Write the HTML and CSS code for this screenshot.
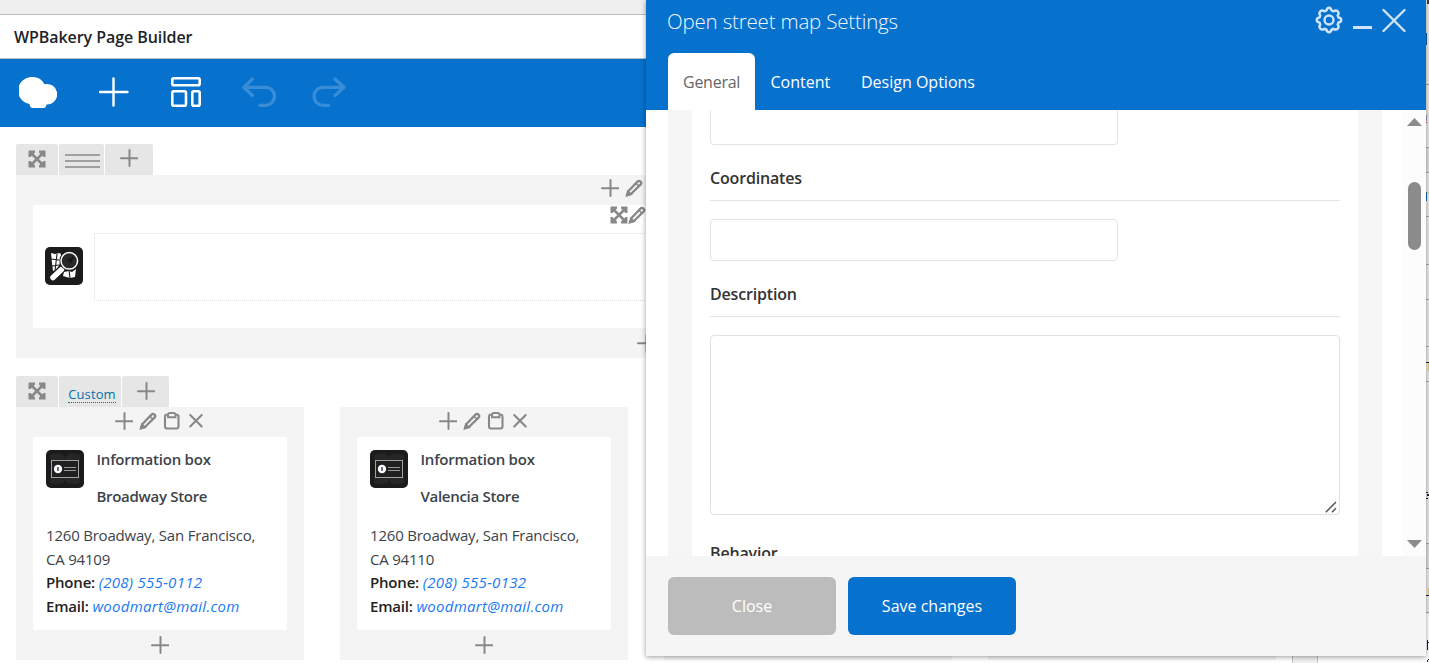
FILE: index.html
```html
<!DOCTYPE html>
<html lang="en">
<head>
<meta charset="utf-8">
<title>WPBakery Page Builder</title>
<link rel="stylesheet" href="styles.css">
</head>
<body>
<svg class="defs" width="0" height="0">
  <symbol id="plus" viewBox="0 0 18 18"><path d="M9.500 1v16M1 9.300h16.500" fill="none" stroke="currentColor" stroke-width="2" stroke-linecap="round"/></symbol>
  <symbol id="pencil" viewBox="0 0 18 18"><path d="M2.200 16l1.300-4L12.500 2.600a2 2 0 0 1 3 3L6.200 14.800z" fill="none" stroke="currentColor" stroke-width="2.300" stroke-linejoin="round"/><path d="M1.500 16.800l1.300-4.500 3.400 3zM11 4.200l3 3" fill="currentColor" stroke="currentColor" stroke-width="1.600"/></symbol>
  <symbol id="clip" viewBox="0 0 18 18"><path d="M4.500 2.500Q2 2.500 2 4.500V14.500q0 2 2 2h9.500q2 0 2-2V4.500q0-2-2.500-2" fill="none" stroke="currentColor" stroke-width="2.100"/><path d="M5 5.200V3q0-2 2-2h3.500q2 0 2 2v2.200z" fill="none" stroke="currentColor" stroke-width="1.900"/></symbol>
  <symbol id="close" viewBox="0 0 18 18"><path d="M3.200 3l11.500 11.500M14.700 3L3.200 14.500" fill="none" stroke="currentColor" stroke-width="2.100" stroke-linecap="round"/></symbol>
  <symbol id="move" viewBox="0 0 18 18"><path d="M3 3l12 12M15 3L3 15" stroke="currentColor" stroke-width="2.500"/><path d="M.5.500h6.500v2L2.500 7h-2zM17.500.500h-6.500v2L15.500 7h2zM.5 17.500h6.500v-2L2.500 11h-2zM17.500 17.500h-6.500v-2l4.500-4.500h2z" fill="currentColor"/></symbol>
  <symbol id="info" viewBox="0 0 38 38"><rect width="38" height="38" rx="5" fill="#1b1b1b"/><path d="M4 5q15-5 15 5 0-10 15-5 1 9-5 14 6 5 5 14-15 4-15-5 0 9-15 5-1-9 5-14-6-5-5-14z" fill="#262626"/><rect x="5.500" y="10.500" width="27" height="17" fill="#202020" stroke="#a3a3a3"/><circle cx="12" cy="19" r="4.200" fill="#fff"/><path d="M12 17v4" stroke="#235" stroke-width="1.300"/><path d="M18 17.500h12M18 20.500h12" stroke="#999"/></symbol>
</svg>

<div class="page">
  <main class="builder">
    <div class="topstrip"></div>
    <h1 class="title"><span>WPBakery Page Builder</span></h1>
    <nav class="toolbar">
      <svg width="38" height="31" viewBox="0 0 38 31"><path d="M13.500 0A13.500 13.500 0 0 1 25.500 7.200 10.300 10.300 0 1 1 27.500 27.500Q27 31 24.500 31H13.500q-2.500 0-3-4A13.600 13.600 0 0 1 13.500 0z" fill="#fff"/></svg>
      <svg width="30" height="30" viewBox="0 0 30 30"><path d="M14.500 1.500v27M1 15h27.500" stroke="#fff" stroke-width="2.400" stroke-linecap="round"/></svg>
      <svg width="30" height="30" viewBox="0 0 30 30" fill="none" stroke="#fff" stroke-width="2.600"><rect x="1.300" y="1.300" width="27.400" height="7" rx="1.500"/><rect x="1.300" y="14.300" width="13.700" height="14.400" rx="1.500"/><rect x="21.300" y="14.300" width="7.400" height="14.400" rx="1.500"/></svg>
      <svg class="dim" width="34" height="30" viewBox="0 0 34 30" fill="none" stroke="#fff" stroke-width="3.200" stroke-linecap="round" stroke-linejoin="round"><path d="M10.500 2L1.800 10.300l8.700 8.200M3 10.300h20.500a9 9 0 0 1 0 18h-5.500"/></svg>
      <svg class="dim" width="34" height="30" viewBox="0 0 34 30" fill="none" stroke="#fff" stroke-width="3.200" stroke-linecap="round" stroke-linejoin="round"><path d="M23 2l9 8.300-9 8.200M31 10.300H11a9 9 0 0 0 0 18h5.500"/></svg>
    </nav>

    <section class="row row-map">
      <div class="tabs">
        <span class="tab tab-move"><svg class="i"><use href="#move"/></svg></span>
        <span class="tab tab-layout"><i></i><i></i><i></i></span>
        <span class="tab tab-add"><svg class="i"><use href="#plus"/></svg></span>
      </div>
      <div class="mapcol">
        <div class="controls"><svg class="i"><use href="#plus"/></svg><svg class="i"><use href="#pencil"/></svg><svg class="i"><use href="#clip"/></svg><svg class="i"><use href="#close"/></svg></div>
        <div class="mapcard">
          <div class="tight"><svg class="i"><use href="#move"/></svg><svg class="i"><use href="#pencil"/></svg><svg class="i"><use href="#clip"/></svg><svg class="i"><use href="#close"/></svg></div>
          <div class="mapbody">
            <svg class="mapicon" width="38" height="38" viewBox="0 0 38 38"><rect width="38" height="38" rx="5" fill="#1c1c1c"/><path d="M6 6l4 1 5-1 2 3-4 13-5 2-1-8zM19 25l5-1 3 1 4-3-1 8-5 1-7-2z" fill="#fff"/><path d="M6 12l8 1M12 7l-2 17M7 19l7-1M24 23l1 8" stroke="#1c1c1c" stroke-width="1.100"/><path d="M18 20L9 30" stroke="#1c1c1c" stroke-width="7.500" stroke-linecap="round"/><path d="M16.500 22.500L8 30.500" stroke="#fff" stroke-width="5.500" stroke-linecap="round"/><circle cx="24.300" cy="13.800" r="10" fill="#1c1c1c"/><circle cx="24.300" cy="13.800" r="8.300" fill="#292929" stroke="#fff" stroke-width="1.500"/><path d="M22 13l7-4-3 8z" fill="#171717"/></svg>
            <div class="dotted"></div>
          </div>
        </div>
        <div class="addbar"><svg class="i"><use href="#plus"/></svg></div>
      </div>
    </section>

    <section class="row row-stores">
      <div class="tabs">
        <span class="tab tab-move"><svg class="i"><use href="#move"/></svg></span>
        <span class="tab tab-custom"><a>Custom</a></span>
        <span class="tab tab-add narrow"><svg class="i"><use href="#plus"/></svg></span>
      </div>
      <div class="cols">
        <div class="col">
          <div class="controls"><svg class="i"><use href="#plus"/></svg><svg class="i"><use href="#pencil"/></svg><svg class="i"><use href="#clip"/></svg><svg class="i"><use href="#close"/></svg></div>
          <article class="card">
            <div class="head"><svg width="38" height="38"><use href="#info"/></svg><div><h2>Information box</h2><h3>Broadway Store</h3></div></div>
            <p>1260 Broadway, San Francisco,<br>CA 94109<br><b>Phone:</b> <em>(208) 555-0112</em><br><b>Email:</b> <em>woodmart@mail.com</em></p>
          </article>
          <div class="addbar"><svg class="i"><use href="#plus"/></svg></div>
        </div>
        <div class="col">
          <div class="controls"><svg class="i"><use href="#plus"/></svg><svg class="i"><use href="#pencil"/></svg><svg class="i"><use href="#clip"/></svg><svg class="i"><use href="#close"/></svg></div>
          <article class="card">
            <div class="head"><svg width="38" height="38"><use href="#info"/></svg><div><h2>Information box</h2><h3>Valencia Store</h3></div></div>
            <p>1260 Broadway, San Francisco,<br>CA 94110<br><b>Phone:</b> <em>(208) 555-0132</em><br><b>Email:</b> <em>woodmart@mail.com</em></p>
          </article>
          <div class="addbar"><svg class="i"><use href="#plus"/></svg></div>
        </div>
        <div class="col"></div>
        <div class="col"></div>
      </div>
    </section>
  </main>
  <div class="gutter"></div>
  <aside class="side">
    <svg width="3" height="663" viewBox="0 0 3 663" shape-rendering="crispEdges"><path fill="#ebebeb" d="M0 0h3v663H0z"/><path fill="#dedede" d="M0 148h3v24H0zM0 544h3v24H0z"/><path fill="#fff" d="M0 614h3v49H0z"/><path fill="#aaa" d="M0 84h3v1H0zM0 147h3v1H0zM0 172h3v1H0zM0 216h3v1H0zM0 264h3v1H0zM0 299h3v1H0zM0 346h3v1H0zM0 381h3v1H0zM0 543h3v1H0zM0 568h3v1H0zM0 612h3v1H0z"/><path fill="#4b3540" d="M1 0h2v4H1z"/><path fill="#1765a8" d="M0 33h1v12H0zM0 192h1v9H0z"/><path fill="#a892bd" d="M0 115h1v6H0z"/><path fill="#c33" d="M0 122h1v1H0z"/><path fill="#223" d="M0 362h3v1H0zM0 492h2v1H0zM1 494h2v2H1zM0 498h2v1H0zM0 595h3v1H0zM0 642h3v1H1zM1 640h1v10H1zM2 659h1v1H2zM1 660h1v2H1z"/><path fill="#e8c477" d="M2 192h1v2H2zM2 363h1v8H2zM2 588h1v7H2z"/></svg>
  </aside>
</div>

<div class="modal">
  <header class="mhead">
    <div class="mtitle"><h2>Open street map Settings</h2>
      <div class="mactions">
        <svg width="28" height="28" viewBox="0 0 28 28" fill="none" stroke="currentColor" stroke-width="2.400"><path stroke-linejoin="round" d="M14 1.700 Q16 1.700 16.500 4.500 L18.500 5.300 Q21 3.500 22.700 5.300 Q24.500 7 22.700 9.500 L23.500 11.500 Q26.300 12 26.300 14 Q26.300 16 23.500 16.500 L22.700 18.500 Q24.500 21 22.700 22.700 Q21 24.500 18.500 22.700 L16.500 23.500 Q16 26.300 14 26.300 Q12 26.300 11.500 23.500 L9.500 22.700 Q7 24.500 5.300 22.700 Q3.500 21 5.300 18.500 L4.500 16.500 Q1.700 16 1.700 14 Q1.700 12 4.500 11.500 L5.300 9.500 Q3.500 7 5.300 5.300 Q7 3.500 9.500 5.300 L11.500 4.500 Q12 1.700 14 1.700z"/><circle cx="14" cy="14" r="4.500"/></svg>
        <svg width="19" height="28" viewBox="0 0 19 28"><path d="M0 21.500h19" stroke="currentColor" stroke-width="3"/></svg>
        <svg width="24" height="28" viewBox="0 0 24 28"><path d="M1.500 4l21 21M22.500 4l-21 21" stroke="currentColor" stroke-width="2.400" stroke-linecap="round"/></svg>
      </div>
    </div>
    <div class="mtabs"><span class="active">General</span><span class="t2">Content</span><span class="t3">Design Options</span></div>
  </header>
  <div class="mbody">
    <div class="panel">
      <div class="fields">
        <div class="input first"></div>
        <label class="coord"><span>Coordinates</span></label>
        <div class="input"></div>
        <label><span>Description</span></label>
        <div class="area"><svg width="12" height="12" viewBox="0 0 12 12"><path d="M.8 11.200L11 1M7 11.200l4-4" stroke="#555" stroke-width="1.500"/></svg></div>
        <label class="behave"><span>Behavior</span></label>
      </div>
    </div>
    <div class="scroll"><svg width="15" height="8"><path d="M0 8l7.500-8L15 8z" fill="#8b8b8b"/></svg><div class="thumb"></div><svg class="down" width="15" height="8"><path d="M0 0h15L7.500 8z" fill="#8b8b8b"/></svg></div>
  </div>
  <footer class="mfoot"><button class="grey">Close</button><button class="blue">Save changes</button></footer>
</div>
</body>
</html>
```
FILE: styles.css
```css
* { box-sizing: border-box; }
body { margin: 0; height: 663px; overflow: hidden; font-family: "Open Sans", "Noto Sans", sans-serif; font-size: 15px; color: #3c434a; background: #fff; }
h1, h2, h3, p { margin: 0; font-weight: 600; }
svg { display: block; flex: none; }
.defs { position: absolute; }
.page { display: flex; height: 663px; }
.builder { width: 1293px; border-right: 1px solid #c3c4c7; background: #fff; overflow: hidden; flex: none; }
.gutter { width: 25px; background: #f0f0f1; border-right: 1px solid #c3c4c7; flex: none; }
.side { flex: 1; display: flex; justify-content: flex-end; background: #fcfcfc; }
.topstrip { height: 15px; background: #efefef; border-bottom: 1px solid #bbb; }
.title { height: 44px; border-bottom: 1px solid #b9bcc0; padding: 0 14px; font-size: 16px; line-height: 44px; letter-spacing: -.07px; color: #1d2327; white-space: nowrap; }
.toolbar { height: 68px; background: #0771ce; display: flex; align-items: center; padding: 0 0 2px 19px; }
.toolbar svg:nth-child(2) { margin-left: 42px; }
.toolbar svg:nth-child(3) { margin-left: 42px; }
.toolbar svg:nth-child(4) { margin-left: 41px; }
.toolbar svg:nth-child(5) { margin-left: 36px; }
.dim { opacity: .2; }
.row { width: 1260px; margin-left: 16px; }
.row-map { margin-top: 17px; }
.row-stores { margin-top: 18px; }
.i { width: 18px; height: 18px; color: #888; }
.tabs { display: flex; gap: 1px; height: 31px; }
.tab { background: #e6e6e6; border-radius: 2px 2px 0 0; display: flex; align-items: center; justify-content: center; }
.tab-move { width: 42px; padding-bottom: 1px; }
.tab-layout { width: 45px; flex-direction: column; gap: 4px; padding: 3px 0 0 1px; }
.tab-layout i { width: 35px; height: 2px; background: #a0a0a0; }
.tab-add { width: 48px; padding-bottom: 3px; }
.tab-add.narrow { width: 47px; padding-bottom: 2px; }
.tab-custom { width: 62px; padding: 5px 0 0 4px; }
.tab-custom a { color: #0073aa; font-size: 13px; letter-spacing: .12px; line-height: 16px; border-bottom: 1px dotted #0073aa; }
.mapcol { height: 183px; background: #f4f4f4; padding: 0 17px; }
.controls { height: 30px; padding-bottom: 4px; display: flex; align-items: center; justify-content: center; gap: 5.700px; }
.mapcard { height: 123px; background: #fff; padding: 1px 12px 0; }
.tight { display: flex; justify-content: center; height: 18px; margin-bottom: 9px; padding-right: 1px; }
.mapbody { display: flex; align-items: center; height: 68px; gap: 11px; }
.mapicon { margin-bottom: 2px; }
.dotted { flex: 1; height: 68px; border: 1px dotted #ddd; }
.addbar { height: 30px; display: flex; align-items: center; justify-content: center; }
.cols { display: flex; gap: 36px; }
.col { width: 288px; height: 253px; background: #f4f4f4; padding: 0 17px; }
.col .controls { padding-bottom: 3px; }
.card { height: 193px; background: #fff; border-radius: 2px; padding: 13px 13px 0; white-space: nowrap; }
.head { display: flex; gap: 12.500px; }
.card h2, .card h3 { font-size: 15px; line-height: 20px; letter-spacing: -.23px; }
.card h2 { margin-top: -1px; }
.card h3 { margin-top: 17px; letter-spacing: -.3px; }
.card p { margin-top: 18px; font-weight: 400; line-height: 23.600px; letter-spacing: -.2px; }
.card b { color: #222; font-weight: 600; }
.card em { color: #1a7af0; letter-spacing: .27px; }

.modal { position: absolute; left: 646px; top: 0; width: 780px; height: 656px; background: #fff; box-shadow: 0 1px 5px rgba(0,0,0,.4); display: flex; flex-direction: column; }
.mhead { height: 110px; background: #0771ce; color: #fff; padding: 0 20px 0 22px; }
.mtitle { height: 53px; display: flex; justify-content: space-between; }
.mtitle h2 { font-size: 20.500px; font-weight: 300; line-height: 43px; letter-spacing: -.18px; color: #f2f8ff; margin-left: -1px; }
.mactions { display: flex; gap: 10px; margin-top: 6px; color: #cfe4f8; }
.mtabs { display: flex; height: 57px; line-height: 58px; font-size: 16px; }
.mtabs span { white-space: nowrap; letter-spacing: 0; }
.mtabs .active { width: 87px; padding-left: 15px; background: #fff; color: #666; border-radius: 6px 6px 0 0; letter-spacing: -.25px; }
.mtabs .t2 { width: 91px; padding-left: 15.500px; }
.mtabs .t3 { padding-left: 15px; }
.mbody { height: 446px; overflow: hidden; display: flex; justify-content: space-between; padding-left: 22px; }
.panel { width: 714px; border: solid #f6f6f6; border-width: 0 24px; padding: 0 18px; height: 446px; overflow: hidden; }
.input { width: 408px; height: 42px; border: 1px solid #e4e4e4; border-radius: 4px; margin: 18px 0 0; }
.input.first { height: 35px; margin: 0; border-top: 0; border-radius: 0 0 4px 4px; }
label { display: block; height: 56px; border-bottom: 1px solid #e3e3e3; font-size: 16px; font-weight: 600; color: #333; line-height: 66px; letter-spacing: -.17px; }
.area { height: 180px; margin-top: 18px; border: 1px solid #e1e1e1; border-radius: 4px; display: flex; justify-content: flex-end; align-items: flex-end; padding: 0 2px 1px; }
label.behave { line-height: 76px; }
.scroll { width: 23px; background: #fcfcfc; display: flex; flex-direction: column; align-items: center; padding: 8px 0; }
.thumb { width: 13px; height: 68px; border-radius: 7px; background: #8b8b8b; margin-top: 56px; }
.down { margin-top: auto; }
.mfoot { height: 100px; background: #f5f5f5; padding: 21px 22px; display: flex; gap: 12px; }
.mfoot button { width: 168px; height: 58px; border: 0; border-radius: 6px; color: #fff; font: 400 16px "Open Sans", sans-serif; letter-spacing: 0; padding: 0; }
.grey { background: #bcbcbc; }
.blue { background: #0771ce; }
```
